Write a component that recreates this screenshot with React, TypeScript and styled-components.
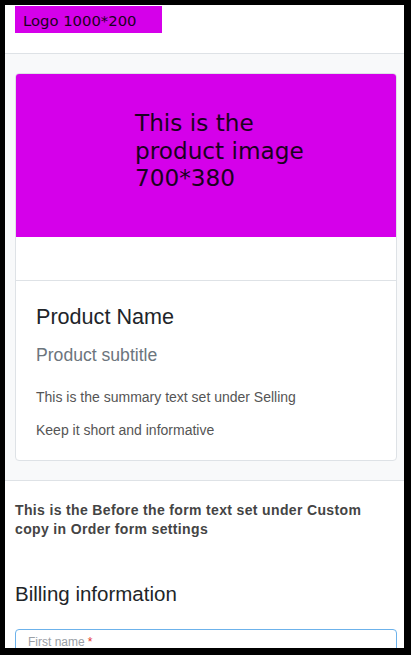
import React from "react";
import styled, { createGlobalStyle } from "styled-components";

const Global = createGlobalStyle`
  html, body { margin: 0; padding: 0; background: #000; }
  body { font-family: "Liberation Sans", Arial, sans-serif; }
  * { box-sizing: border-box; }
`;

const Frame = styled.div`
  width: 399px;
  height: 643px;
  margin: 5px 0 0 5px;
  background: #fff;
  overflow: hidden;
`;

const Header = styled.header`
  height: 49px;
  padding: 1px 10px 0;
  border-bottom: 1px solid #dee2e6;
  background: #fff;
`;

const Logo = styled.div`
  width: 147px;
  height: 27px;
  background: #d500ea;
  display: flex;
  align-items: center;
  padding: 2px 0 0 8px;
  font-family: "DejaVu Sans", sans-serif;
  font-size: 14.8px;
  color: #1a0020;
`;

const Hero = styled.section`
  background: #f8f9fa;
  padding: 19px 7px 19px 10px;
  border-bottom: 1px solid #dee2e6;
`;

const Card = styled.div`
  background: #fff;
  border: 1px solid #dee2e6;
  border-radius: 4px;
  overflow: hidden;
`;

const ImageBox = styled.div`
  height: 163px;
  background: #d500ea;
  padding: 35px 0 0 119px;
  font-family: "DejaVu Sans", sans-serif;
  font-size: 23.2px;
  line-height: 27.5px;
  color: #1a0020;
`;

const ImageStrip = styled.div`
  height: 44px;
  border-bottom: 1px solid #dee2e6;
`;

const CardBody = styled.div`
  padding: 23px 20px 19px 20px;
`;

const Title = styled.h5`
  margin: 0;
  font-size: 21.6px;
  font-weight: 400;
  line-height: 1.2;
  color: #212529;
`;

const Subtitle = styled.h6`
  margin: 15px 0 0;
  font-size: 17.6px;
  font-weight: 400;
  line-height: 1.2;
  color: #6c757d;
`;

const Summary = styled.p<{ $gap: number }>`
  margin: ${(p) => p.$gap}px 0 0;
  font-size: 14px;
  line-height: 21px;
  color: #555;
`;

const FormSection = styled.section`
  padding: 20px 7px 0 10px;
  background: #fff;
`;

const Before = styled.p`
  margin: 0;
  font-size: 14px;
  font-weight: 700;
  line-height: 19px;
  letter-spacing: 0.35px;
  color: #444;
`;

const SectionTitle = styled.h4`
  margin: 43px 0 0;
  font-size: 20.5px;
  font-weight: 400;
  line-height: 1.2;
  color: #212529;
`;

const Field = styled.div`
  margin-top: 22px;
  height: 50px;
  border: 1px solid #6cb2eb;
  border-radius: 4px;
  padding: 2px 12px 0;
`;

const Label = styled.label`
  font-size: 12px;
  line-height: 1.2;
  color: #9aa0a6;
`;

const Req = styled.span`
  color: #e3342f;
  margin-left: 3px;
`;

export default function App() {
  return (
    <>
      <Global />
      <Frame>
        <Header>
          <Logo>Logo 1000*200</Logo>
        </Header>
        <Hero>
          <Card>
            <ImageBox>
              This is the
              <br />
              product image
              <br />
              700*380
            </ImageBox>
            <ImageStrip />
            <CardBody>
              <Title>Product Name</Title>
              <Subtitle>Product subtitle</Subtitle>
              <Summary $gap={21}>This is the summary text set under Selling</Summary>
              <Summary $gap={12}>Keep it short and informative</Summary>
            </CardBody>
          </Card>
        </Hero>
        <FormSection>
          <Before>
            This is the Before the form text set under Custom copy in Order form settings
          </Before>
          <SectionTitle>Billing information</SectionTitle>
          <Field>
            <Label>
              First name<Req>*</Req>
            </Label>
          </Field>
        </FormSection>
      </Frame>
    </>
  );
}
